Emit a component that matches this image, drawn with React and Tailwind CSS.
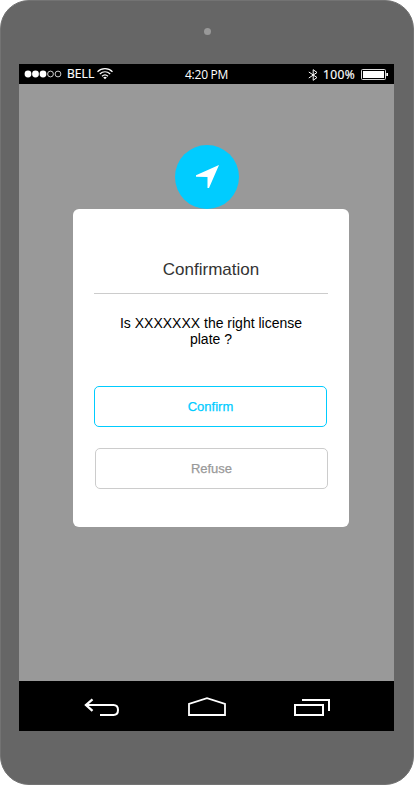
import React from "react";

const sans = "font-['Liberation_Sans',Arial,sans-serif]";

function SignalDots() {
  return (
    <svg width="38" height="8" viewBox="0 0 38 8" className="shrink-0">
      <circle cx="4" cy="4" r="3.4" fill="#fff" />
      <circle cx="11.5" cy="4" r="3.4" fill="#fff" />
      <circle cx="19" cy="4" r="3.4" fill="#fff" />
      <circle cx="26.5" cy="4" r="2.9" fill="none" stroke="#fff" strokeWidth="0.8" />
      <circle cx="34" cy="4" r="2.9" fill="none" stroke="#fff" strokeWidth="0.8" />
    </svg>
  );
}

function WifiIcon() {
  return (
    <svg width="16" height="12" viewBox="0 0 16 12" fill="none" stroke="#fff" strokeWidth="1.2" className="shrink-0">
      <path d="M0.5 3.7C4.7 -0.3 11.3 -0.3 15.5 3.7" />
      <path d="M2.8 6C5.9 3.1 10.1 3.1 13.2 6" />
      <path d="M5 8.2C6.8 6.5 9.2 6.5 11 8.2" />
      <path d="M6.2 9.4 8 11.3 9.8 9.4C8.7 8.5 7.3 8.5 6.2 9.4Z" fill="#fff" stroke="none" />
    </svg>
  );
}

function StatusBar() {
  return (
    <div className="grid h-5 shrink-0 grid-cols-[161px_1fr_auto] items-center bg-black pr-[5px] pl-[5px] font-['Open_Sans','Noto_Sans',sans-serif] text-[12px] leading-5 text-white">
      <div className="flex items-center">
        <SignalDots />
        <span className="ml-[5px] w-[28px] text-[12px] font-medium tracking-[0.1px] whitespace-nowrap [-webkit-text-stroke:0.2px_#fff]">BELL</span>
        <span className="ml-[2px] -mt-px"><WifiIcon /></span>
      </div>
      <span className="pt-[2px] text-[12px] leading-[18px] tracking-[-0.25px] whitespace-nowrap">4:20 PM</span>
      <div className="flex items-center">
        <svg width="10" height="12" viewBox="0 0 10 12" fill="none" stroke="#fff" strokeWidth="1" className="mt-[2px]">
          <path d="M0.8 3 9 8.5 5.2 11.3V0.7L9 3.5 0.8 9" />
        </svg>
        <span className="ml-[5px] w-[34px] pt-[2px] font-medium leading-[18px] tracking-[0.4px] whitespace-nowrap [-webkit-text-stroke:0.2px_#fff]">100%</span>
        <svg width="28" height="12" viewBox="0 0 28 12" className="ml-[4px]">
          <rect x="0.5" y="1.5" width="24" height="10" rx="1" fill="none" stroke="#ddd" />
          <rect x="2" y="3" width="21" height="7" fill="#fff" />
          <path d="M25.3 5h1.7v3h-1.7z" fill="#fff" />
        </svg>
      </div>
    </div>
  );
}

function NavBar() {
  return (
    <div className="flex h-[50px] shrink-0 items-start bg-black pt-4 pl-[65px]">
      <svg width="36" height="20" viewBox="0 0 36 20" fill="none" stroke="#fff" strokeWidth="2">
        <path d="M8.5 2.4 2 8 8.5 13.8" strokeWidth="2.3" />
        <path d="M1.5 8H29.5Q34 8.2 34 13Q34 17.8 29.5 18H16" />
      </svg>
      <svg width="38" height="20" viewBox="0 0 38 20" fill="none" stroke="#fff" strokeWidth="1.8" className="ml-[68px]">
        <path d="M1 18V7L19 1.2 37 7V18Z" />
      </svg>
      <svg width="37" height="20" viewBox="0 0 37 20" fill="none" stroke="#fff" strokeWidth="2" className="ml-[68px]">
        <path d="M1 8H29V18H1ZM8 3H35V14" />
      </svg>
    </div>
  );
}

export default function App() {
  return (
    <div className="h-[785px] w-[414px] bg-white">
      <div className="flex h-full flex-col rounded-[29px] border border-[#737373] bg-[#666] px-[18px]">
        <div className="flex h-[63px] shrink-0 justify-center pt-[27px]">
          <span className="size-[7px] rounded-full bg-[#999]" />
        </div>
        <div className="flex h-[667px] w-[375px] flex-col bg-[#999]">
          <StatusBar />
          <main className={`flex flex-1 flex-col pt-[61px] ${sans}`}>
            <div className="ml-[156px] size-16 rounded-full bg-[#00ccff]">
              <svg width="64" height="64" viewBox="0 0 64 64">
                <path d="M44 20 34 43H32.5V32L21 31.7V30.2Z" fill="#fff" />
              </svg>
            </div>
            <section className="ml-[54px] flex h-[318px] w-[276px] flex-col rounded-[6px] bg-white px-[21px] pt-[51px] text-center">
              <h1 className="h-[33px] text-[17px] leading-5 text-[#333]">Confirmation</h1>
              <hr className="border-t border-[#ccc]" />
              <p className="mt-[21px] px-5 text-[14px] leading-4 text-black">
                Is XXXXXXX the right license plate ?
              </p>
              <button className="mt-[39px] h-[41px] w-[233px] shrink-0 rounded-[5px] border border-[#00ccff] text-[13px] text-[#00ccff] [-webkit-text-stroke:0.25px_#00ccff]">
                Confirm
              </button>
              <button className="mt-[21px] ml-px h-[41px] w-[233px] shrink-0 rounded-[5px] border border-[#ccc] text-[13px] text-[#999] [-webkit-text-stroke:0.25px_#999]">
                Refuse
              </button>
            </section>
          </main>
          <NavBar />
        </div>
      </div>
    </div>
  );
}
